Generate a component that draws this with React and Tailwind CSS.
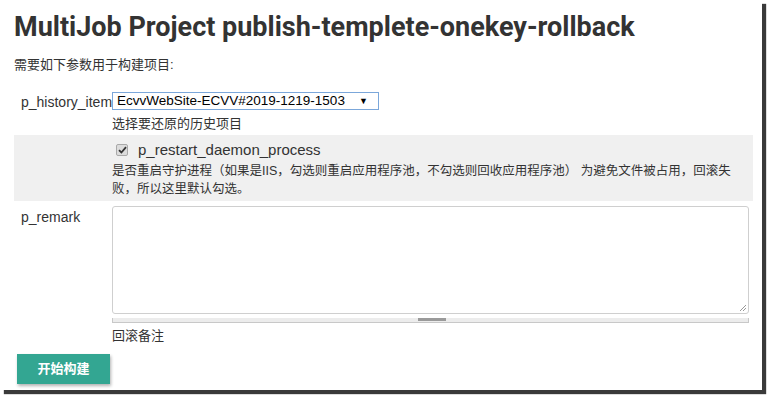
import React from "react";

const cjk = { fontFamily: '"Liberation Sans", "Noto Sans CJK SC", sans-serif' };

export default function App() {
  return (
    <div className="w-[767px] h-[395px] bg-white overflow-hidden">
      <div className="relative w-[762px] h-[390px] bg-white shadow-[4px_4px_1px_#3a3a3a] text-[#333]" style={cjk}>
        <h1
          className="pl-[14px] pt-[10px] text-[27px] leading-[34px] font-bold text-[#333]"
          style={{ fontFamily: 'Roboto, "Liberation Sans", sans-serif' }}
        >
          MultiJob Project publish-templete-onekey-rollback
        </h1>
        <p className="pl-[14px] mt-[12px] text-[13px] leading-[18px]">需要如下参数用于构建项目:</p>

        <div className="ml-[14px] w-[739px] mt-[13px]">
          {/* p_history_item */}
          <div className="flex h-[48px] pt-[5px]">
            <div className="w-[98px] pl-[7px] text-[14px] leading-[18px] pt-[1px]">p_history_item</div>
            <div className="flex flex-col">
              <div className="w-[267px] h-[18px] border border-[#7ba7da] flex items-center justify-between pl-[4px] pr-[10px] text-[13.5px] leading-[16px] text-black">
                <span>EcvvWebSite-ECVV#2019-1219-1503</span>
                <span className="text-[9px]">▼</span>
              </div>
              <div className="text-[13px] leading-[18px] mt-[5px]">选择要还原的历史项目</div>
            </div>
          </div>

          {/* p_restart_daemon_process */}
          <div className="flex h-[66px] bg-[#f0f0f0] pt-[6px]">
            <div className="w-[98px]" />
            <div className="flex flex-col">
              <div className="flex items-center h-[18px] pl-[4px]">
                <span className="w-[12px] h-[12px] rounded-[2px] bg-[#dcdcdc] border border-[#a9a9a9] flex items-center justify-center">
                  <svg width="9" height="8" viewBox="0 0 9 8">
                    <path d="M1 4.2 L3.4 6.5 L8 1.2" stroke="#333" strokeWidth="1.8" fill="none" />
                  </svg>
                </span>
                <span className="ml-[10px] text-[15px] leading-[18px]">p_restart_daemon_process</span>
              </div>
              <div className="text-[12.5px] leading-[18px] mt-[3px] whitespace-nowrap">
                是否重启守护进程（如果是IIS，勾选则重启应用程序池，不勾选则回收应用程序池） 为避免文件被占用，回滚失
                <br />
                败，所以这里默认勾选。
              </div>
            </div>
          </div>

          {/* p_remark */}
          <div className="flex pt-[5px]">
            <div className="w-[98px] pl-[7px] text-[14px] leading-[18px] pt-[2px]">p_remark</div>
            <div className="flex flex-col">
              <div className="relative w-[637px] h-[108px] border border-[#cfcfcf] rounded-[3px] bg-white">
                <svg className="absolute right-[1px] bottom-[1px]" width="8" height="8" viewBox="0 0 8 8">
                  <path d="M7 1 L1 7 M7 4 L4 7" stroke="#999" strokeWidth="1" />
                </svg>
              </div>
              <div className="relative w-[637px] h-[5px] mt-[4px] bg-[#ececec] border-l border-r border-b border-[#c8c8c8]">
                <div className="absolute left-[305px] top-[0px] w-[28px] h-[3px] bg-[#9a9a9a]" />
              </div>
              <div className="text-[13px] leading-[18px] mt-[4px]">回滚备注</div>
            </div>
          </div>
        </div>

        <button className="ml-[17px] mt-[9px] w-[93px] h-[30px] bg-[#33a692] text-white text-[13px] font-bold shadow-[1px_2px_3px_rgba(0,0,0,0.3)]">
          开始构建
        </button>
      </div>
    </div>
  );
}
